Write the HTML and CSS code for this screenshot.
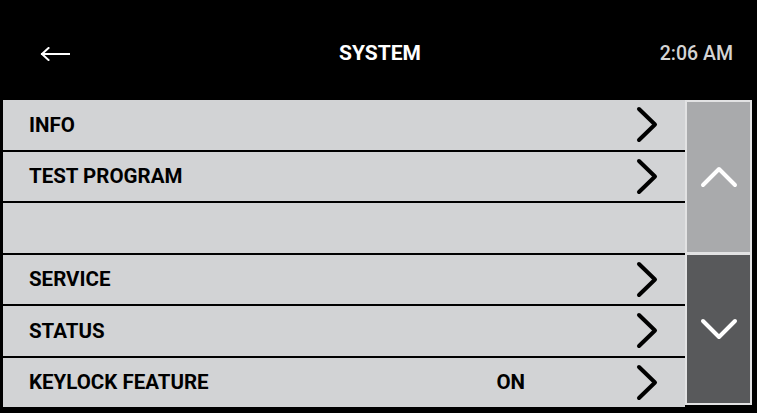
FILE: index.html
```html
<!DOCTYPE html>
<html>
<head>
<meta charset="utf-8">
<link rel="stylesheet" href="styles.css">
</head>
<body>
<div class="screen">
  <header class="topbar">
    <div class="back">
      <svg width="30" height="14" viewBox="0 0 30 14"><path d="M2 7H29M8.5 1L2 7L8.5 13" fill="none" stroke="#fff" stroke-width="2" stroke-linecap="square"/></svg>
    </div>
    <div class="title">SYSTEM</div>
    <div class="clock">2:06 AM</div>
  </header>
  <main class="content">
    <div class="list">
      <div class="row"><span class="label">INFO</span><svg class="chev" width="22" height="37" viewBox="0 0 22 37"><path d="M3 3L19 18.5L3 34" fill="none" stroke="#000" stroke-width="4" stroke-linecap="round" stroke-linejoin="round"/></svg></div>
      <div class="row"><span class="label">TEST PROGRAM</span><svg class="chev" width="22" height="37" viewBox="0 0 22 37"><path d="M3 3L19 18.5L3 34" fill="none" stroke="#000" stroke-width="4" stroke-linecap="round" stroke-linejoin="round"/></svg></div>
      <div class="row"></div>
      <div class="row"><span class="label">SERVICE</span><svg class="chev" width="22" height="37" viewBox="0 0 22 37"><path d="M3 3L19 18.5L3 34" fill="none" stroke="#000" stroke-width="4" stroke-linecap="round" stroke-linejoin="round"/></svg></div>
      <div class="row"><span class="label">STATUS</span><svg class="chev" width="22" height="37" viewBox="0 0 22 37"><path d="M3 3L19 18.5L3 34" fill="none" stroke="#000" stroke-width="4" stroke-linecap="round" stroke-linejoin="round"/></svg></div>
      <div class="row"><span class="label">KEYLOCK FEATURE</span><span class="value">ON</span><svg class="chev" width="22" height="37" viewBox="0 0 22 37"><path d="M3 3L19 18.5L3 34" fill="none" stroke="#000" stroke-width="4" stroke-linecap="round" stroke-linejoin="round"/></svg></div>
    </div>
    <div class="scroller">
      <div class="scroll-btn up">
        <svg width="38" height="22" viewBox="0 0 38 22"><path d="M3 19L19 3L35 19" fill="none" stroke="#fff" stroke-width="4" stroke-linecap="round" stroke-linejoin="round"/></svg>
      </div>
      <div class="scroll-btn down">
        <svg width="38" height="22" viewBox="0 0 38 22"><path d="M3 3L19 19L35 3" fill="none" stroke="#fff" stroke-width="4" stroke-linecap="round" stroke-linejoin="round"/></svg>
      </div>
    </div>
  </main>
</div>
</body>
</html>
```

FILE: styles.css
```css
html, body {
  margin: 0;
  padding: 0;
  background: #000;
}

.screen {
  width: 757px;
  height: 413px;
  background: #000;
  font-family: Roboto, "Liberation Sans", sans-serif;
  overflow: hidden;
}

.topbar {
  height: 100px;
  display: grid;
  grid-template-columns: 1fr auto 1fr;
  align-items: center;
  padding: 6px 0 0 3px;
  box-sizing: border-box;
}

.back {
  display: flex;
  align-items: center;
  margin: 2px 0 0 37px;
}

.title {
  color: #fff;
  font-weight: 700;
  font-size: 21px;
}

.clock {
  justify-self: end;
  margin-right: 24px;
  color: #d4d4d4;
  font-weight: 500;
  font-size: 19.5px;
}

.content {
  display: flex;
  height: 307px;
  padding-left: 3px;
}

.list {
  width: 682px;
  display: grid;
  grid-template-rows: repeat(6, 1fr);
  row-gap: 2px;
}

.row {
  background: #d2d3d5;
  display: flex;
  align-items: center;
  padding: 0 27px 0 26px;
}

.label {
  flex: 1;
  font-weight: 700;
  font-size: 20.5px;
  color: #000;
}

.value {
  font-weight: 700;
  font-size: 20.5px;
  color: #000;
  margin-right: 111px;
}

.chev {
  display: block;
  flex: none;
}

.scroller {
  width: 67px;
  height: 305px;
  background: #e2e2e3;
  padding: 2px 2px;
  box-sizing: border-box;
  display: flex;
  flex-direction: column;
  gap: 3px;
}

.scroll-btn {
  display: flex;
  align-items: center;
  justify-content: center;
}

.up {
  height: 150px;
  background: #a9aaac;
}

.down {
  flex: 1;
  background: #58595b;
}
```
